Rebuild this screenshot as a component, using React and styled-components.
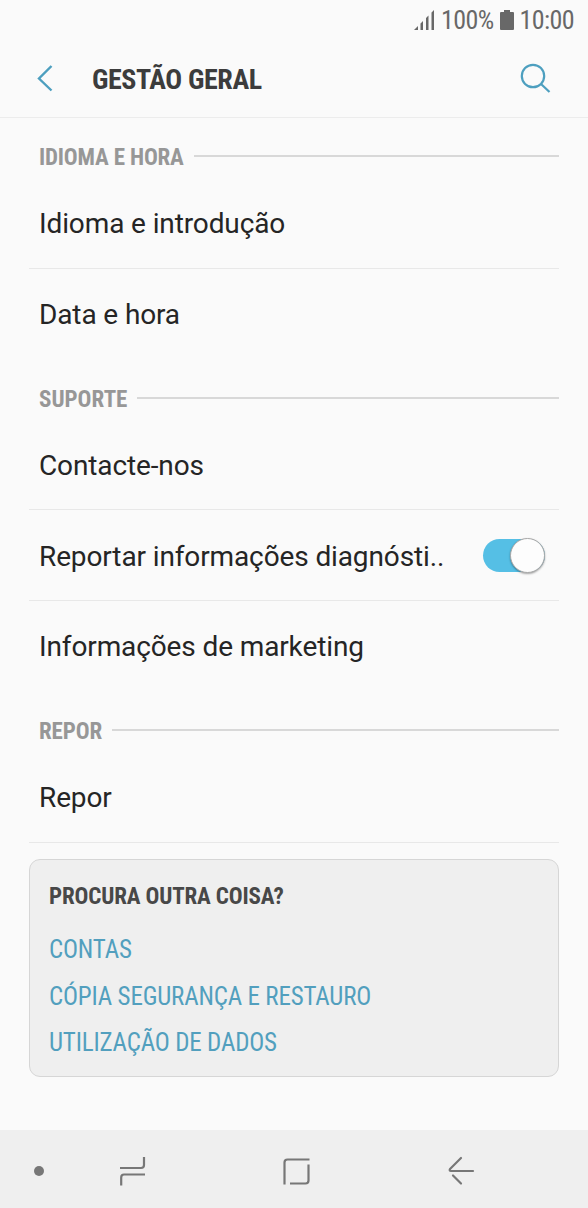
import React from 'react';
import styled, { createGlobalStyle } from 'styled-components';

const GlobalStyle = createGlobalStyle`
  * {
    box-sizing: border-box;
  }
  body {
    margin: 0;
    background: #fafafa;
    font-family: Roboto, "Liberation Sans", sans-serif;
  }
`

const Screen = styled.div`
  width: 588px;
  height: 1208px;
  display: flex;
  flex-direction: column;
  background: #fafafa;
  overflow: hidden;
`

const Condensed = styled.span`
  font-family: "Roboto Condensed", Roboto, sans-serif;
  font-stretch: 75%;
  white-space: nowrap;
`

const StatusBar = styled.div`
  height: 40px;
  padding: 0 14px 0 0;
  display: flex;
  justify-content: flex-end;
  align-items: center;
  color: #686868;
`

const StatusText = styled(Condensed)`
  font-size: 26px;
  line-height: 40px;
  letter-spacing: -0.6px;
`

const SignalIcon = styled.svg`
  margin-right: 6px;
`

const BatteryIcon = styled.svg`
  margin: 0 6px;
`

const Header = styled.header`
  height: 78px;
  padding: 0 36px;
  display: flex;
  align-items: center;
  border-bottom: 1px solid #ececec;
`

const BackIcon = styled.svg`
  margin-bottom: 2px;
`

const SearchIcon = styled.svg`
  margin-bottom: 1px;
`

const Title = styled(Condensed)`
  flex: 1;
  padding-top: 1px;
  margin-left: 38px;
  color: #3c3c3c;
  font-size: 28px;
  font-weight: 700;
  letter-spacing: -0.38px;
`

const Content = styled.main`
  flex: 1;
  padding: 0 29px;
`

const SectionHeader = styled.div`
  height: 60px;
  padding: 18px 0 0 10px;
  display: flex;
  align-items: flex-start;
`

const SectionTitle = styled(Condensed)`
  color: #979797;
  font-size: 23px;
  line-height: 43px;
  font-weight: 700;
  letter-spacing: ${props => props.$spacing || 0}px;
`

const Line = styled.div`
  flex: 1;
  height: 2px;
  margin: 19px 0 0 10px;
  background: #d8d8d8;
`

const Row = styled.div`
  height: 90.75px;
  padding: 2px 13px 0 10px;
  display: flex;
  align-items: center;
  justify-content: space-between;
  border-bottom: 1px solid ${props => props.$last ? 'transparent' : '#e8e8e8'};
  color: #252525;
  font-size: 28px;
  letter-spacing: -0.12px;
`

const Switch = styled.div`
  width: 62px;
  height: 33px;
  margin: 0 1px 2px 0;
  display: flex;
  align-items: center;
  justify-content: flex-end;
  border-radius: 17px;
  background: #55bfe5;
`

const Knob = styled.div`
  width: 35px;
  height: 35px;
  border: 1px solid #a8a8a8;
  border-radius: 50%;
  background: #fdfdfd;
  box-shadow: 0 1px 2px rgba(0, 0, 0, 0.35);
`

const Card = styled.section`
  height: 218px;
  margin-top: 16.5px;
  padding: 15px 19px 13px;
  display: flex;
  flex-direction: column;
  border: 1px solid #d6d6d6;
  border-radius: 11px;
  background: #efefef;
`

const CardTitle = styled(Condensed)`
  color: #484848;
  font-size: 23px;
  line-height: 44px;
  font-weight: 700;
  letter-spacing: -0.15px;
  margin-bottom: 8px;
`

const CardLink = styled(Condensed)`
  color: #529fbe;
  font-size: 25px;
  line-height: 46.5px;
  letter-spacing: -0.18px;
`

const NavBar = styled.nav`
  height: 78px;
  padding: 4px 0 0 34px;
  display: flex;
  align-items: center;
  background: #efefef;
  color: #777;
`

const Dot = styled.div`
  width: 10px;
  height: 10px;
  border-radius: 50%;
  background: #777;
`

const RecentsIcon = styled.svg`
  margin-left: 74px;
`

const HomeIcon = styled.svg`
  margin-left: 136px;
`

const ReturnIcon = styled.svg`
  margin-left: 137px;
`

function Section({ title, spacing, children }) {
  return (
    <>
      <SectionHeader>
        <SectionTitle $spacing={spacing}>{title}</SectionTitle>
        <Line />
      </SectionHeader>
      {children}
    </>
  );
}

function App() {
  return (
    <Screen>
      <GlobalStyle />
      <StatusBar>
        <SignalIcon width="21" height="20" viewBox="0 0 21 20" fill="currentColor">
          <path d="M0 20L4 16V20ZM6.5 13.5L9 11V20H6.5ZM12 8L14.5 5.5V20H12ZM17.5 2.5L20 0V20H17.5Z" />
        </SignalIcon>
        <StatusText>100%</StatusText>
        <BatteryIcon width="14" height="20" viewBox="0 0 14 20" fill="currentColor">
          <path d="M4 0H10V2H13Q14 2 14 3V19Q14 20 13 20H1Q0 20 0 19V3Q0 2 1 2H4Z" />
        </BatteryIcon>
        <StatusText>10:00</StatusText>
      </StatusBar>
      <Header>
        <BackIcon width="18" height="28" viewBox="0 0 18 28" fill="none" stroke="#4d9fbf" strokeWidth="2.4">
          <path d="M15.5 2L3 14.5L15.5 26.5" />
        </BackIcon>
        <Title>GESTÃO GERAL</Title>
        <SearchIcon width="32" height="32" viewBox="0 0 32 32" fill="none" stroke="#4d9fbf" strokeWidth="2.2">
          <circle cx="13" cy="14" r="11.2" />
          <path d="M21 22L29.5 30" />
        </SearchIcon>
      </Header>
      <Content>
        <Section title="IDIOMA E HORA" spacing={-0.18}>
          <Row>Idioma e introdução</Row>
          <Row $last>Data e hora</Row>
        </Section>
        <Section title="SUPORTE">
          <Row>Contacte-nos</Row>
          <Row>
            <span>Reportar informações diagnósti..</span>
            <Switch><Knob /></Switch>
          </Row>
          <Row $last>Informações de marketing</Row>
        </Section>
        <Section title="REPOR" spacing={-0.1}>
          <Row>Repor</Row>
        </Section>
        <Card>
          <CardTitle>PROCURA OUTRA COISA?</CardTitle>
          <CardLink>CONTAS</CardLink>
          <CardLink>CÓPIA SEGURANÇA E RESTAURO</CardLink>
          <CardLink>UTILIZAÇÃO DE DADOS</CardLink>
        </Card>
      </Content>
      <NavBar>
        <Dot />
        <RecentsIcon width="28" height="30" viewBox="0 0 28 30" fill="none" stroke="currentColor" strokeWidth="2.2">
          <path d="M2 12H23Q26 12 26 9V1M27 18.5H6Q3.2 18.5 3.2 21.5V29.5" />
        </RecentsIcon>
        <HomeIcon width="28" height="28" viewBox="0 0 28 28" fill="none" stroke="currentColor" strokeWidth="2.2">
          <path d="M2.5 27.5V5.5Q2.5 2.5 5.5 2.5H27.5M26.5 7.5V23.5Q26.5 26.5 23.5 26.5H8" />
        </HomeIcon>
        <ReturnIcon width="28" height="30" viewBox="0 0 28 30" fill="none" stroke="currentColor" strokeWidth="2.2" strokeLinecap="round" strokeLinejoin="round">
          <path d="M14 2L3 13Q2 15 4 15H26M6 19.5L14 27.5" />
        </ReturnIcon>
      </NavBar>
    </Screen>
  );
}

export default App;
